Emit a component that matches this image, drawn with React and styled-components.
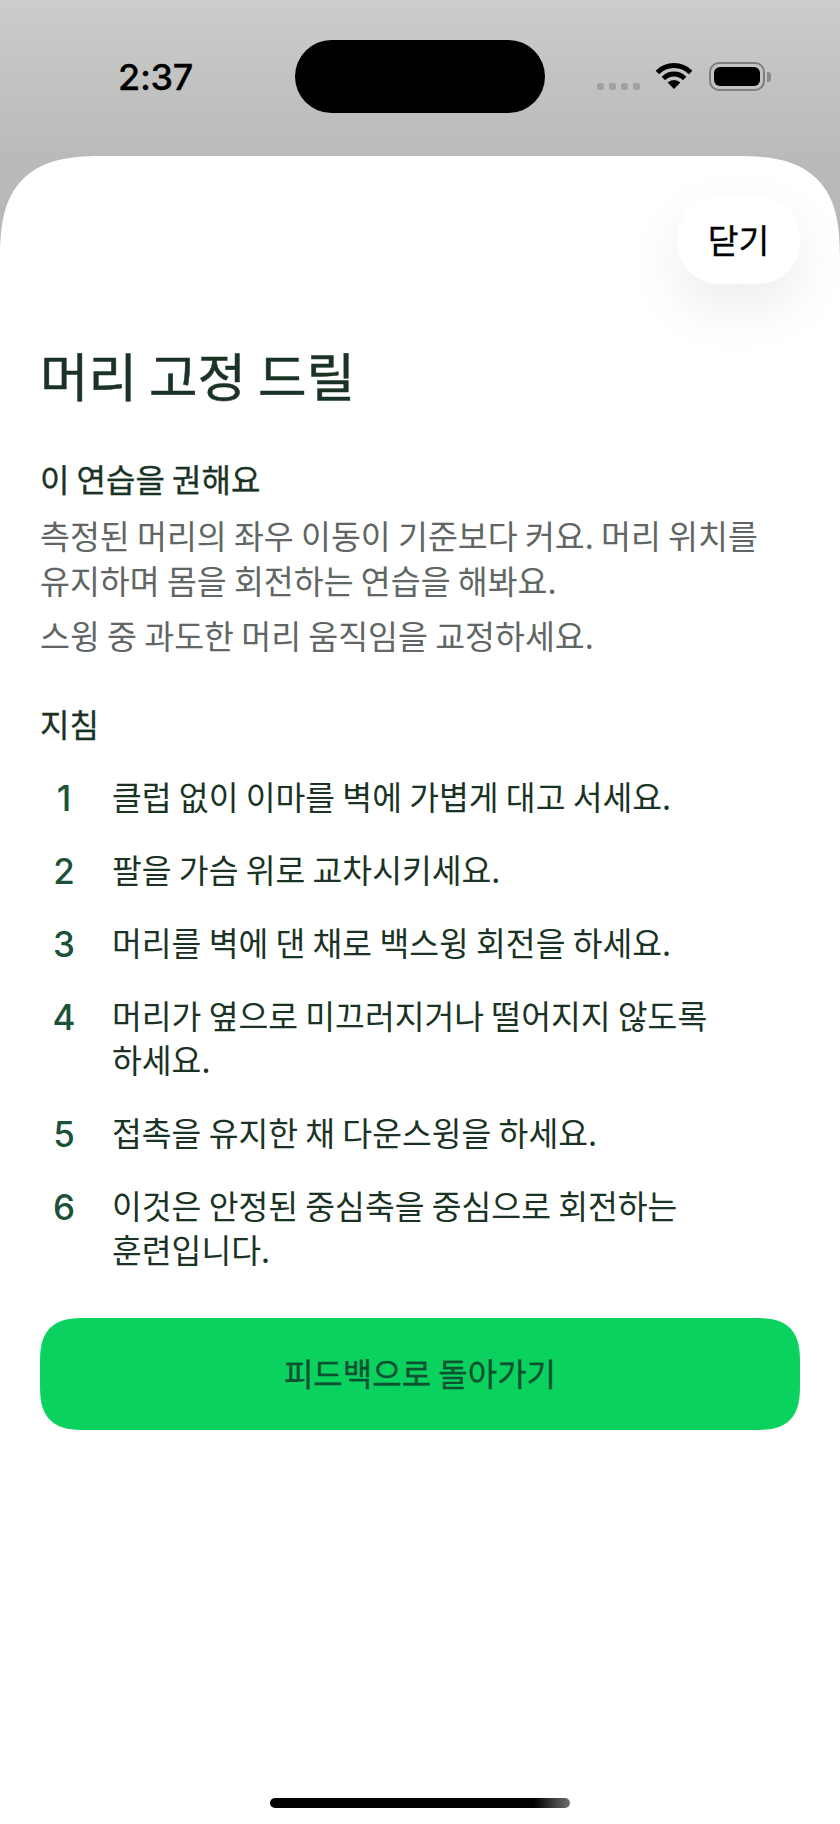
import React from 'react';
import styled, { createGlobalStyle } from 'styled-components';

const Global = createGlobalStyle`
  html, body { margin: 0; padding: 0; background: #fff; }
  * { box-sizing: border-box; }
`;

const KR = `"Noto Sans CJK KR", "Noto Sans", sans-serif`;

const Screen = styled.div`
  width: 840px;
  height: 1824px;
  overflow: hidden;
  display: flex;
  flex-direction: column;
  font-family: ${KR};
  background: linear-gradient(180deg, #cccccc 0, #b8bbb7 156px, #b4b7b3 270px, #b4b7b3 100%);
`;

const StatusBar = styled.header`
  flex: 0 0 156px;
  display: grid;
  grid-template-columns: 295px 250px 1fr;
  align-items: start;
  padding-top: 40px;
`;

const Time = styled.div`
  padding: 15px 0 0 118px;
  font-family: Inter, "Liberation Sans", sans-serif;
  font-size: 36px;
  line-height: 44px;
  font-weight: 500;
  letter-spacing: -0.3px;
  -webkit-text-stroke: 0.3px #000;
  color: #000;
`;

const Island = styled.div`
  height: 73px;
  border-radius: 36.5px;
  background: #000;
`;

const Indicators = styled.div`
  position: relative;
  height: 73px;
  padding: 22px 0 0 52px;
  display: flex;
  align-items: flex-start;
`;

const Dots = styled.div`
  display: flex;
  gap: 5px;
  margin: 21px 15px 0 0;
`;

const Dot = styled.span`
  width: 7px;
  height: 7px;
  border-radius: 2.5px;
  background: #a0a1a0;
`;

const Battery = styled.div`
  position: relative;
  width: 56px;
  height: 29px;
  margin-left: 16px;
  padding: 3px;
  border: 2.5px solid #7d7e7d;
  border-radius: 10px;
  &::after {
    content: '';
    position: absolute;
    right: -8px;
    top: 8px;
    width: 4px;
    height: 10px;
    border-radius: 0 3px 3px 0;
    background: #8a8b8a;
  }
`;

const BatteryFill = styled.div`
  width: 100%;
  height: 100%;
  border-radius: 6px;
  background: #000;
`;

const Sheet = styled.main`
  flex: 1;
  display: flex;
  flex-direction: column;
  background: #fff;
  border-radius: 78px 78px 0 0;
  padding: 40px 40px 16px;
  @supports (corner-shape: squircle) {
    border-radius: 106px 106px 0 0;
    corner-shape: superellipse(1.5);
  }
`;

const CloseRow = styled.div`
  display: flex;
  justify-content: flex-end;
`;

const CloseButton = styled.button`
  width: 123px;
  height: 88px;
  border: 0;
  padding: 0 0 3px;
  border-radius: 42px;
  background: #fff;
  box-shadow: 0 22px 56px rgba(0, 0, 0, 0.08);
  font-family: ${KR};
  font-size: 33.5px;
  font-weight: 400;
  -webkit-text-stroke: 0.35px #000;
  color: #000;
`;

const Title = styled.h1`
  margin: 60px 0 0;
  font-size: 52.8px;
  line-height: 60px;
  font-weight: 400;
  -webkit-text-stroke: 0.5px #1a3325;
  color: #1a3325;
`;

const SectionTitle = styled.h2`
  margin: ${p => p.$top}px 0 0;
  font-size: 32px;
  line-height: 40px;
  font-weight: 400;
  -webkit-text-stroke: 0.35px #1a3325;
  color: #1a3325;
`;

const Body = styled.p`
  margin: ${p => p.$top}px 0 0;
  font-size: 32.5px;
  line-height: 45px;
  font-weight: 400;
  color: #5f6663;
  word-break: keep-all;
`;

const Steps = styled.ol`
  list-style: none;
  margin: 31px 0 0;
  padding: 0;
  display: flex;
  flex-direction: column;
  gap: 29px;
`;

const Step = styled.li`
  display: flex;
  align-items: flex-start;
`;

const StepNumber = styled.span`
  flex: 0 0 48px;
  margin: 2px 24px -2px 0;
  text-align: center;
  font-family: Inter, "Liberation Sans", sans-serif;
  font-size: 35px;
  line-height: 44px;
  font-weight: 500;
  color: #1b5238;
`;

const StepText = styled.span`
  flex: 1;
  padding-right: 30px;
  font-size: 32.4px;
  line-height: 44px;
  font-weight: 400;
  color: #1a3325;
  word-break: keep-all;
`;

const PrimaryButton = styled.button`
  margin-top: 47px;
  flex: 0 0 112px;
  width: 100%;
  border: 0;
  border-radius: 34px;
  padding: 0 0 4px;
  background: #0bd15f;
  font-family: ${KR};
  font-size: 32px;
  font-weight: 400;
  -webkit-text-stroke: 0.35px #0c5130;
  color: #0c5130;
  @supports (corner-shape: squircle) {
    border-radius: 46px;
    corner-shape: superellipse(1.5);
  }
`;

const HomeIndicator = styled.div`
  align-self: center;
  margin-top: auto;
  width: 300px;
  height: 10px;
  border-radius: 5px;
  background: linear-gradient(90deg, #000 0, #000 88%, #6f6f6f 100%);
`;

const steps = [
  '클럽 없이 이마를 벽에 가볍게 대고 서세요.',
  '팔을 가슴 위로 교차시키세요.',
  '머리를 벽에 댄 채로 백스윙 회전을 하세요.',
  '머리가 옆으로 미끄러지거나 떨어지지 않도록 하세요.',
  '접촉을 유지한 채 다운스윙을 하세요.',
  '이것은 안정된 중심축을 중심으로 회전하는 훈련입니다.',
];

export default function App() {
  return (
    <Screen>
      <Global />
      <StatusBar>
        <Time>2:37</Time>
        <Island />
        <Indicators>
          <Dots>
            <Dot /><Dot /><Dot /><Dot />
          </Dots>
          <svg width="38" height="27" viewBox="0 0 38 27" fill="none">
            <path d="M2.4 10.4A23.5 23.5 0 0 1 35.6 10.4" stroke="#000" strokeWidth="5" />
            <path d="M8.4 16.4A15 15 0 0 1 29.6 16.4" stroke="#000" strokeWidth="5" />
            <path d="M19 27L12.6 20.6A9 9 0 0 1 25.4 20.6Z" fill="#000" />
          </svg>
          <Battery><BatteryFill /></Battery>
        </Indicators>
      </StatusBar>
      <Sheet>
        <CloseRow>
          <CloseButton>닫기</CloseButton>
        </CloseRow>
        <Title>머리 고정 드릴</Title>
        <SectionTitle $top={54}>이 연습을 권해요</SectionTitle>
        <Body $top={14}>측정된 머리의 좌우 이동이 기준보다 커요. 머리 위치를 유지하며 몸을 회전하는 연습을 해봐요.</Body>
        <Body $top={10}>스윙 중 과도한 머리 움직임을 교정하세요.</Body>
        <SectionTitle $top={46}>지침</SectionTitle>
        <Steps>
          {steps.map((text, i) => (
            <Step key={i}>
              <StepNumber>{i + 1}</StepNumber>
              <StepText>{text}</StepText>
            </Step>
          ))}
        </Steps>
        <PrimaryButton>피드백으로 돌아가기</PrimaryButton>
        <HomeIndicator />
      </Sheet>
    </Screen>
  );
}
